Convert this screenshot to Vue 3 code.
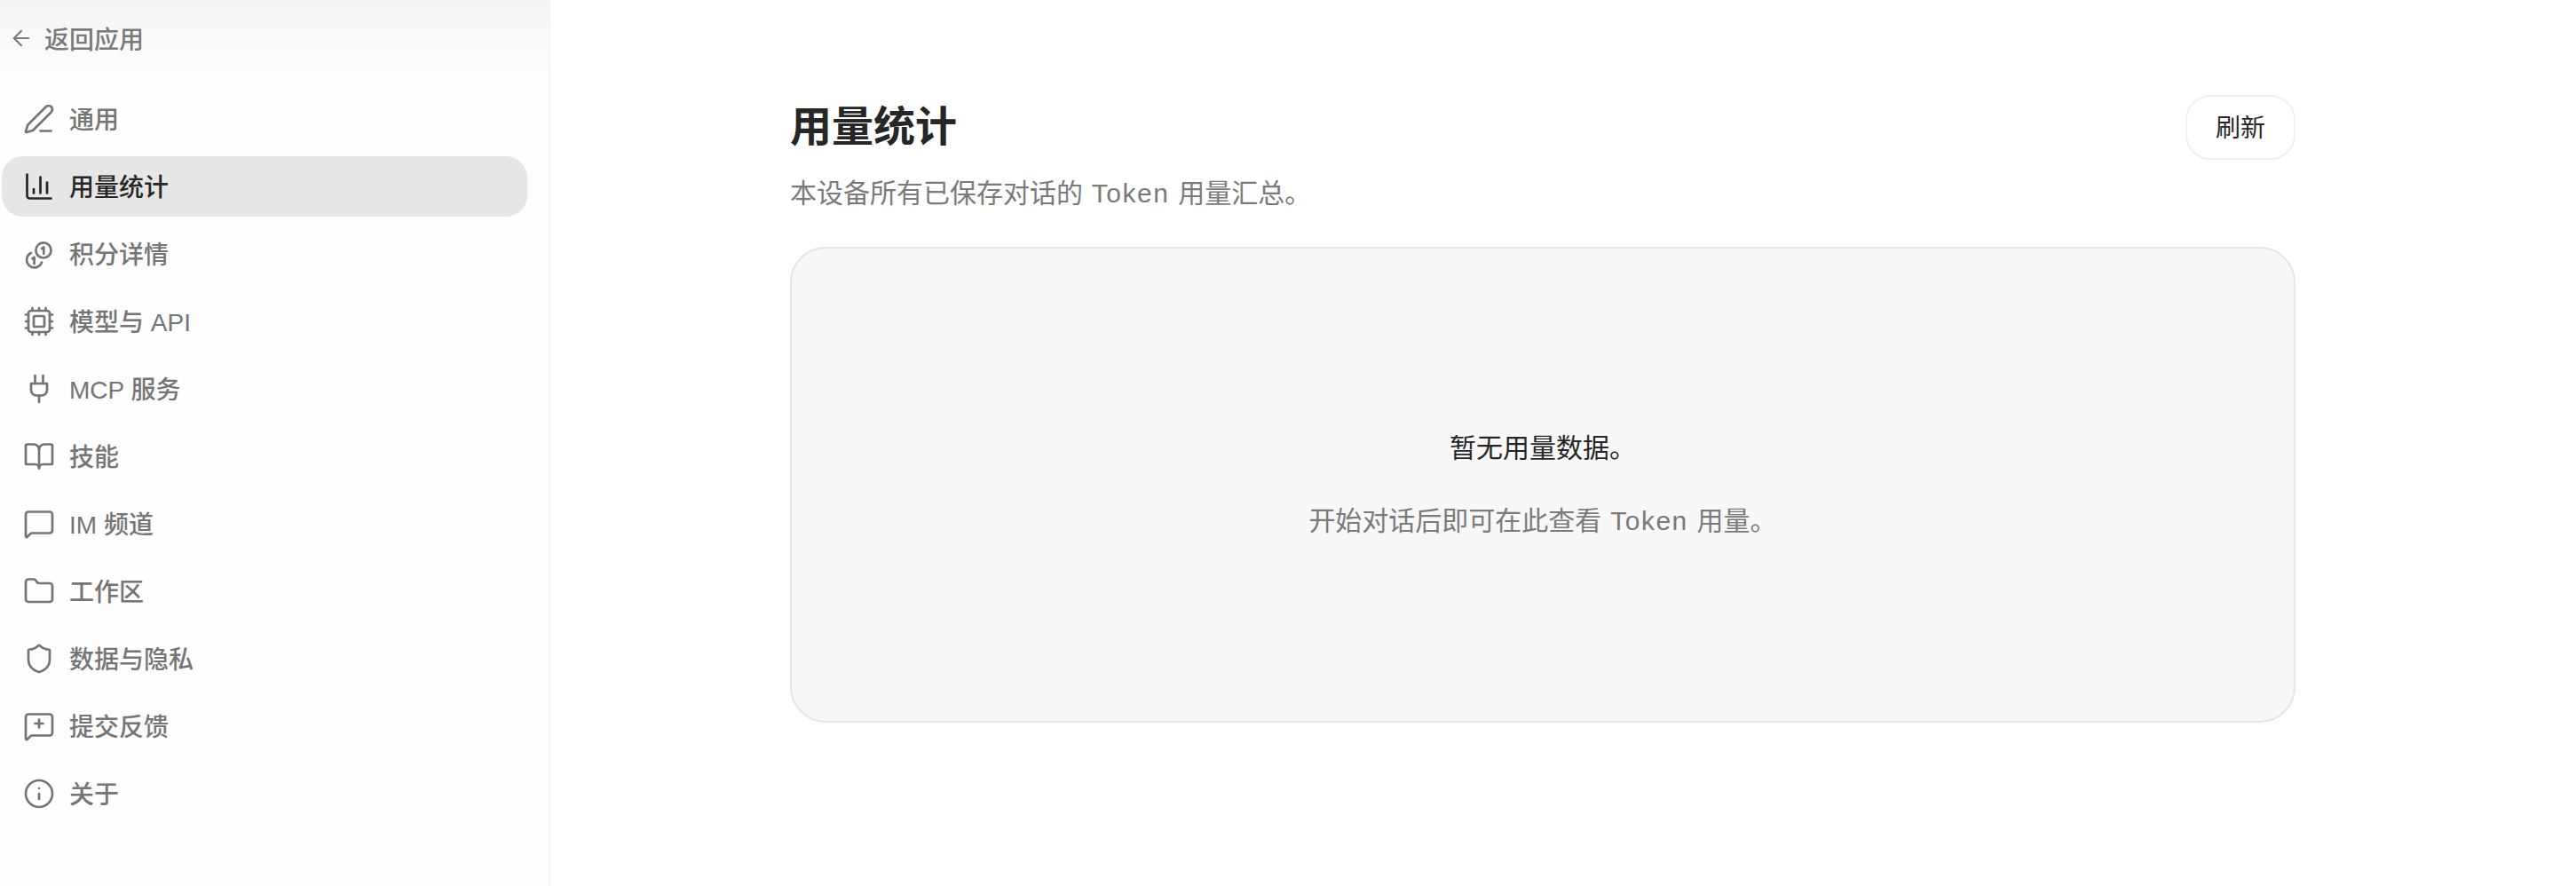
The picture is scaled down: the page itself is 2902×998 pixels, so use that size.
<script setup>
const items = [
  { label: '通用', paths: ['M13 21h8', 'M21.174 6.812a1 1 0 0 0-3.986-3.987L3.842 16.174a2 2 0 0 0-.5.83l-1.321 4.352a.5.5 0 0 0 .623.622l4.353-1.32a2 2 0 0 0 .83-.497z'] },
  { label: '用量统计', active: true, paths: ['M3 3v16a2 2 0 0 0 2 2h16', 'M18 17V9', 'M13 17V5', 'M8 17v-3'] },
  { label: '积分详情', paths: ['M15.3 3.6a5.7 5.7 0 1 1 0 11.4a5.7 5.7 0 0 1 0-11.4z', 'M14.1 8l1.4-1.1v5', 'M6 11.3A5.77 5.77 0 1 0 14 18.3', 'M7 15.6l1.4-1.1v5'] },
  { label: '模型与 API', paths: ['M12 20v2', 'M12 2v2', 'M17 20v2', 'M17 2v2', 'M2 12h2', 'M2 17h2', 'M2 7h2', 'M20 12h2', 'M20 17h2', 'M20 7h2', 'M7 20v2', 'M7 2v2', 'M6 4h12a2 2 0 0 1 2 2v12a2 2 0 0 1-2 2H6a2 2 0 0 1-2-2V6a2 2 0 0 1 2-2z', 'M9 8h6a1 1 0 0 1 1 1v6a1 1 0 0 1-1 1H9a1 1 0 0 1-1-1V9a1 1 0 0 1 1-1z'] },
  { label: 'MCP 服务', paths: ['M12 22v-5', 'M9 8V2', 'M15 8V2', 'M18 8v5a4 4 0 0 1-4 4h-4a4 4 0 0 1-4-4V8Z'] },
  { label: '技能', paths: ['M12 7v14', 'M3 18a1 1 0 0 1-1-1V4a1 1 0 0 1 1-1h5a4 4 0 0 1 4 4 4 4 0 0 1 4-4h5a1 1 0 0 1 1 1v13a1 1 0 0 1-1 1h-6a3 3 0 0 0-3 3 3 3 0 0 0-3-3z'] },
  { label: 'IM 频道', paths: ['M22 17a2 2 0 0 1-2 2H6.828a2 2 0 0 0-1.414.586l-2.202 2.202A.71.71 0 0 1 2 21.286V5a2 2 0 0 1 2-2h16a2 2 0 0 1 2 2z'] },
  { label: '工作区', paths: ['M20 20a2 2 0 0 0 2-2V8a2 2 0 0 0-2-2h-7.9a2 2 0 0 1-1.69-.9L9.6 3.9A2 2 0 0 0 7.93 3H4a2 2 0 0 0-2 2v13a2 2 0 0 0 2 2Z'] },
  { label: '数据与隐私', paths: ['M20 13c0 5-3.5 7.5-7.66 8.95a1 1 0 0 1-.67-.01C7.5 20.5 4 18 4 13V6a1 1 0 0 1 1-1c2 0 4.5-1.2 6.24-2.72a1.17 1.17 0 0 1 1.52 0C14.51 3.81 17 5 19 5a1 1 0 0 1 1 1z'] },
  { label: '提交反馈', paths: ['M22 17a2 2 0 0 1-2 2H6.828a2 2 0 0 0-1.414.586l-2.202 2.202A.71.71 0 0 1 2 21.286V5a2 2 0 0 1 2-2h16a2 2 0 0 1 2 2z', 'M12 7v6', 'M9 10h6'] },
  { label: '关于', paths: ['M22 12a10 10 0 1 1-20 0a10 10 0 0 1 20 0z', 'M12 16v-4', 'M12 8h.01'] },
]
</script>

<template>
  <div class="page">
    <aside class="sidebar">
      <div class="back">
        <svg class="back-icon" viewBox="0 0 24 24">
          <path d="m12 19-7-7 7-7" />
          <path d="M19 12H5" />
        </svg>
        <span>返回应用</span>
      </div>
      <nav class="nav">
        <div v-for="item in items" :key="item.label" class="nav-item" :class="{ active: item.active }">
          <svg class="icon" viewBox="0 0 24 24">
            <path v-for="d in item.paths" :key="d" :d="d" />
          </svg>
          <span>{{ item.label }}</span>
        </div>
      </nav>
    </aside>
    <main class="main">
      <div class="content">
        <div class="head">
          <div>
            <h1>用量统计</h1>
            <p class="sub">本设备所有已保存对话的<span class="latin"> Token </span>用量汇总。</p>
          </div>
          <button class="refresh">刷新</button>
        </div>
        <div class="empty">
          <p class="empty-title">暂无用量数据。</p>
          <p class="empty-sub">开始对话后即可在此查看<span class="latin"> Token </span>用量。</p>
        </div>
      </div>
    </main>
  </div>
</template>

<style scoped>
.page {
  display: flex;
  height: 998px;
  background: #fff;
  font-family: "Liberation Sans", "Noto Sans CJK SC", sans-serif;
  overflow: hidden;
}

.sidebar {
  width: 620px;
  flex: none;
  box-sizing: border-box;
  background: #fefefe;
  border-right: 2px solid #f4f4f4;
  padding: 0 24px 0 2px;
}

.back {
  display: flex;
  align-items: center;
  gap: 12px;
  height: 96px;
  margin: 0 -24px 0 -2px;
  padding: 0 0 10px 10px;
  box-sizing: border-box;
  font-size: 28px;
  font-weight: 500;
  color: #7a7a7a;
  background: linear-gradient(#f5f5f5, #fefefe);
}

.back-icon {
  width: 28px;
  height: 28px;
}

.back svg path,
.icon path {
  fill: none;
  stroke: currentColor;
  stroke-width: 1.8;
  stroke-linecap: round;
  stroke-linejoin: round;
}

.nav {
  display: flex;
  flex-direction: column;
  gap: 8px;
  padding-top: 4px;
}

.nav-item {
  display: flex;
  align-items: center;
  gap: 16px;
  height: 68px;
  padding-left: 24px;
  border-radius: 24px;
  font-size: 28px;
  font-weight: 500;
  color: #757575;
}

.nav-item span {
  margin-bottom: 3px;
}

.nav-item.active {
  background: #e6e6e6;
  color: #262626;
}

.icon {
  width: 36px;
  height: 36px;
  flex: none;
}

.main {
  flex: 1;
  padding: 107px 0 0 270px;
}

.content {
  width: 1696px;
}

.head {
  display: flex;
  justify-content: space-between;
  align-items: flex-start;
}

h1 {
  margin: 0;
  font-size: 47px;
  line-height: 72px;
  font-weight: 700;
  color: #262626;
}

.sub {
  margin: 19px 0 0;
  font-size: 30px;
  line-height: 40px;
  color: #7a7a7a;
}

.latin {
  letter-spacing: 1.5px;
}

.refresh {
  width: 124px;
  height: 73px;
  padding: 0 0 4px;
  border: 2px solid #f0f0f0;
  border-radius: 28px;
  background: #fff;
  font: inherit;
  font-size: 28px;
  color: #262626;
}

.empty {
  margin-top: 40px;
  height: 536px;
  box-sizing: border-box;
  border: 2px solid #e5e5e5;
  border-radius: 40px;
  background: #f8f8f8;
  display: flex;
  flex-direction: column;
  align-items: center;
  justify-content: center;
}

.empty-title {
  margin: 0;
  font-size: 30px;
  line-height: 42px;
  color: #262626;
}

.empty-sub {
  margin: 40px 0 0;
  font-size: 30px;
  line-height: 42px;
  color: #7a7a7a;
}
</style>

<style>
html,
body {
  margin: 0;
  background: #fff;
}
</style>
